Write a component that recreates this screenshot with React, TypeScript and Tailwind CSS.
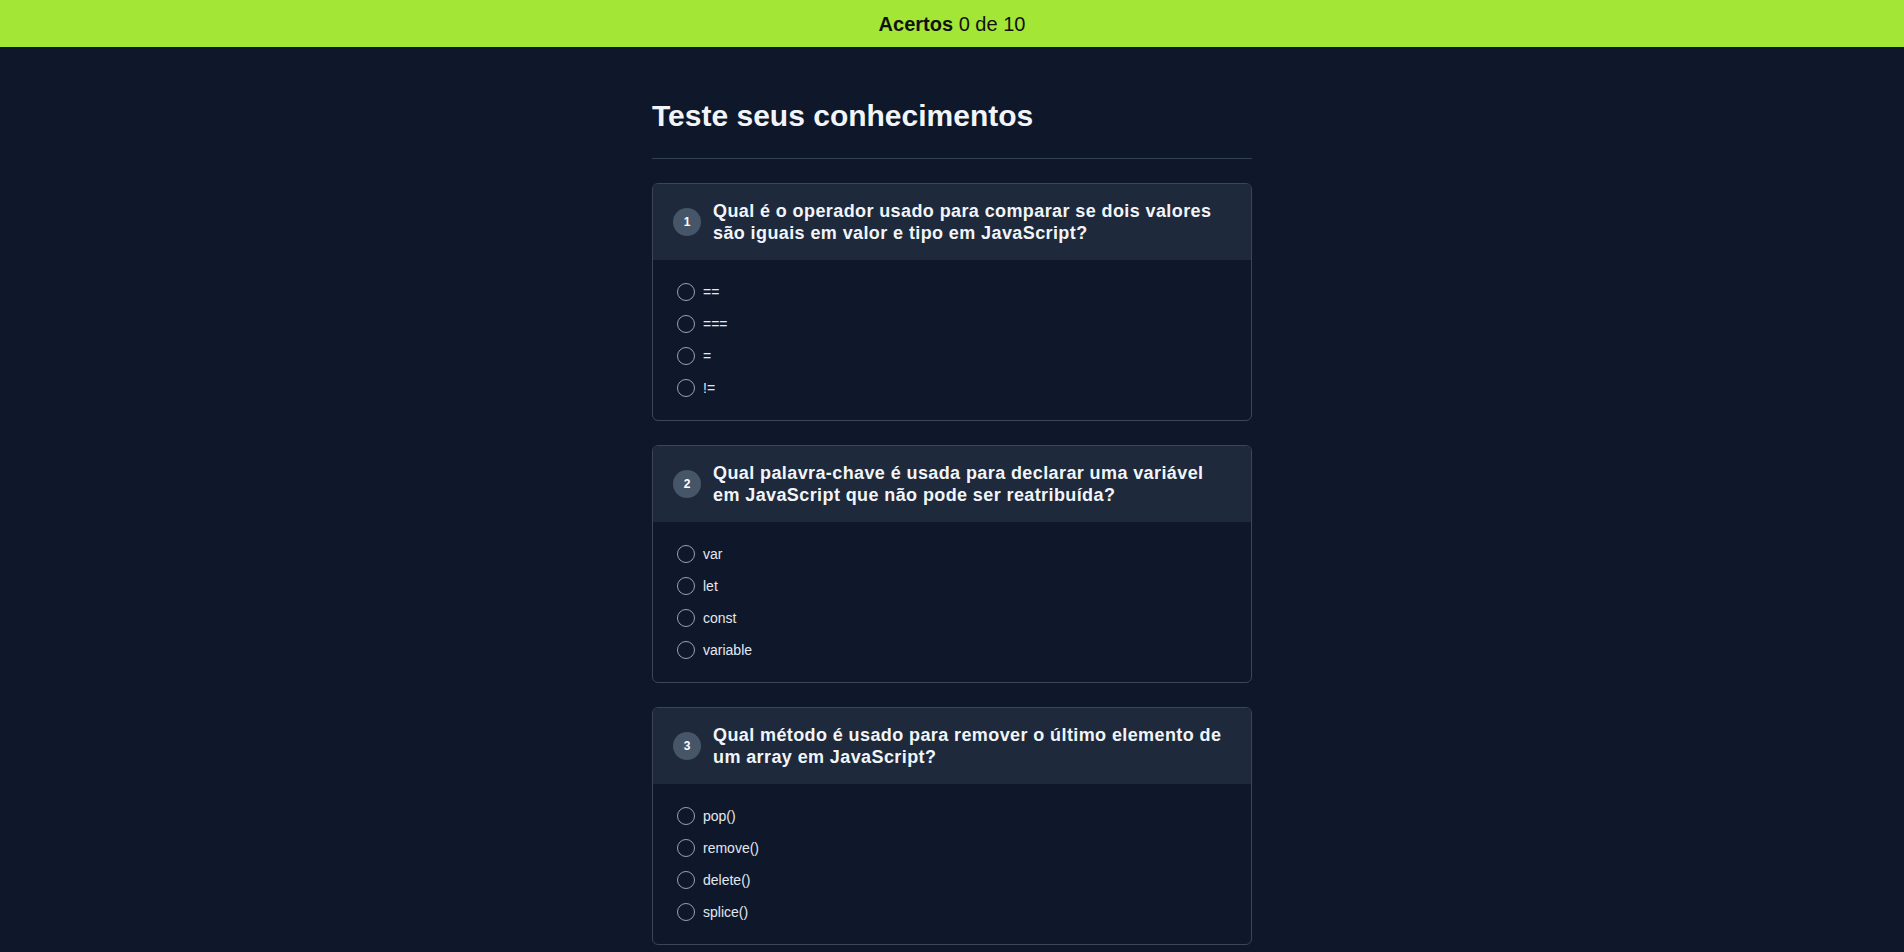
import React, { useState } from "react";

type Q = { q: string; options: string[] };

const questions: Q[] = [
  {
    q: "Qual é o operador usado para comparar se dois valores são iguais em valor e tipo em JavaScript?",
    options: ["==", "===", "=", "!="],
  },
  {
    q: "Qual palavra-chave é usada para declarar uma variável em JavaScript que não pode ser reatribuída?",
    options: ["var", "let", "const", "variable"],
  },
  {
    q: "Qual método é usado para remover o último elemento de um array em JavaScript?",
    options: ["pop()", "remove()", "delete()", "splice()"],
  },
  {
    q: "Qual método é usado para adicionar um elemento ao final de um array em JavaScript?",
    options: ["push()", "append()", "add()", "insert()"],
  },
  {
    q: "Qual é o resultado de typeof null em JavaScript?",
    options: ["null", "undefined", "object", "number"],
  },
  {
    q: "Qual método converte uma string JSON em um objeto JavaScript?",
    options: ["JSON.parse()", "JSON.stringify()", "JSON.convert()", "JSON.toObject()"],
  },
  {
    q: "Qual função é usada para executar um código após um determinado tempo em JavaScript?",
    options: ["setInterval()", "setTimeout()", "delay()", "wait()"],
  },
  {
    q: "Qual método retorna um novo array com os resultados de uma função aplicada a cada elemento?",
    options: ["forEach()", "filter()", "map()", "reduce()"],
  },
  {
    q: "Qual palavra-chave é usada para definir uma função assíncrona em JavaScript?",
    options: ["await", "async", "defer", "promise"],
  },
  {
    q: "Qual operador é usado para concatenar strings em JavaScript?",
    options: ["+", "&", ".", "*"],
  },
];

function QuestionCard({ index, item }: { index: number; item: Q }) {
  const [sel, setSel] = useState<number | null>(null);
  return (
    <div className="mb-6 overflow-hidden rounded-md border border-[#3b4759] bg-[#0f172a]">
      <div className="flex items-center gap-3 bg-[#1e293b] px-5 py-4">
        <div className="flex h-7 w-7 shrink-0 items-center justify-center rounded-full bg-[#475569] text-xs font-bold text-white">
          {index + 1}
        </div>
        <h2 className="text-lg font-bold leading-[22px] tracking-[0.4px] text-[#f1f5f9]">{item.q}</h2>
      </div>
      <div className="flex flex-col gap-2 px-6 py-5">
        {item.options.map((o, i) => (
          <label key={i} className="flex h-6 cursor-pointer items-center gap-2">
            <span
              onClick={() => setSel(i)}
              className="flex h-[18px] w-[18px] items-center justify-center rounded-full border-[1.5px] border-[#94a3b8]"
            >
              {sel === i ? <span className="h-2 w-2 rounded-full bg-[#a3e635]" /> : null}
            </span>
            <span onClick={() => setSel(i)} className="text-sm text-[#e2e8f0]">
              {o}
            </span>
          </label>
        ))}
      </div>
    </div>
  );
}

export default function App() {
  return (
    <div
      className="min-h-screen bg-[#0f172a]"
      style={{ fontFamily: '"Liberation Sans", Arial, sans-serif' }}
    >
      <div className="flex h-[47px] items-center justify-center bg-[#a3e635] text-xl text-[#111111]">
        <span>
          <strong className="font-bold">Acertos</strong> 0 de 10
        </span>
      </div>
      <div className="mx-auto w-[600px] pt-[51px]">
        <h1 className="border-b border-[#334155] pb-6 text-3xl font-bold leading-9 text-[#f1f5f9]">
          Teste seus conhecimentos
        </h1>
        <div className="mt-6">
          {questions.map((q, i) => (
            <QuestionCard key={i} index={i} item={q} />
          ))}
        </div>
      </div>
    </div>
  );
}
